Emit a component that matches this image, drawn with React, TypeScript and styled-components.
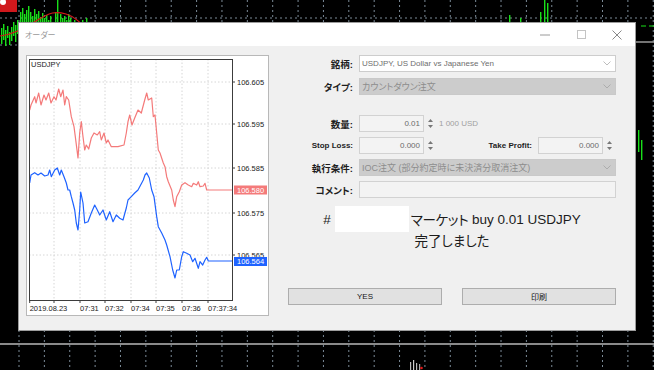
import React from 'react';
import styled, { createGlobalStyle } from 'styled-components';

const GlobalStyle = createGlobalStyle`
  html, body {
    margin: 0;
    padding: 0;
    background: #000;
  }
  body {
    width: 654px;
    height: 370px;
    overflow: hidden;
    font-family: "Liberation Sans", "Noto Sans CJK JP", sans-serif;
  }
`;

const red = '#f47a7a';
const blue = '#1f63ff';

const Desktop = styled.div`
  position: relative;
  width: 654px;
  height: 370px;
  background: #000;
  overflow: hidden;
`;

const Backdrop = styled.svg`
  position: absolute;
  left: 0;
  top: 0;
`;

const Window = styled.div`
  position: absolute;
  left: 18px;
  top: 22px;
  width: 618px;
  height: 309px;
  box-sizing: border-box;
  border: 1px solid #9c9c9c;
  background: #f0f0f0;
  display: flex;
  flex-direction: column;
`;

const TitleBar = styled.div`
  height: 23px;
  background: #fff;
  display: flex;
  align-items: center;
  padding-left: 6px;
`;

const Title = styled.div`
  flex: 1;
  font-size: 8px;
  color: #9a9a9a;
  font-feature-settings: "palt";
`;

const Controls = styled.div`
  display: flex;
  height: 100%;
`;

const ControlButton = styled.div`
  width: 36px;
  height: 100%;
  display: flex;
  align-items: center;
  justify-content: center;
`;

const Body = styled.div`
  flex: 1;
  display: flex;
  padding: 9px 0 0 7px;
`;

const ChartPanel = styled.div`
  width: 243px;
  height: 261px;
  box-sizing: border-box;
  border: 1px solid #b8b8b8;
  background: #fff;
`;

const Form = styled.div`
  margin-left: 19px;
  width: 328px;
  display: flex;
  flex-direction: column;
`;

const Section = styled.div<{ $gap: number; $top?: number }>`
  display: flex;
  flex-direction: column;
  gap: ${p => p.$gap}px;
  margin-top: ${p => p.$top ?? 0}px;
`;

const Row = styled.div`
  display: grid;
  grid-template-columns: 65px 257px;
  column-gap: 6px;
  height: 17px;
  align-items: center;
`;

const Label = styled.div<{ $jp?: boolean }>`
  text-align: right;
  font-weight: bold;
  font-size: ${p => (p.$jp ? '9.5px' : '8px')};
  color: #1e1e1e;
  white-space: nowrap;
  font-feature-settings: "palt";
`;

const Select = styled.div<{ $disabled?: boolean }>`
  height: 17px;
  box-sizing: border-box;
  border: 1px solid ${p => (p.$disabled ? '#c9c9c9' : '#cdcdcd')};
  background: ${p => (p.$disabled ? '#cccccc' : '#ffffff')};
  color: ${p => (p.$disabled ? '#8c8c8c' : '#6e6e6e')};
  font-size: 8px;
  display: flex;
  align-items: center;
  padding: 0 4px 0 2px;
  white-space: nowrap;
  overflow: hidden;
`;

const SelectText = styled.span<{ $jp?: boolean }>`
  flex: 1;
  font-size: ${p => (p.$jp ? '9px' : '8px')};
  font-feature-settings: "palt";
`;

const FieldLine = styled.div`
  display: flex;
  align-items: center;
  height: 17px;
`;

const NumberBox = styled.div`
  width: 65px;
  height: 17px;
  box-sizing: border-box;
  border: 1px solid #d2d2d2;
  background: #f3f3f3;
  color: #6b6b6b;
  font-size: 8px;
  display: flex;
  align-items: center;
  justify-content: flex-end;
  padding-right: 3px;
`;

const Spinner = styled.div`
  width: 9px;
  height: 17px;
  margin-left: 2px;
  display: flex;
  flex-direction: column;
  justify-content: center;
  align-items: center;
  gap: 3px;
`;

const Hint = styled.span`
  margin-left: 4px;
  font-size: 8px;
  color: #a0a0a0;
`;

const InlineLabel = styled(Label)`
  flex: 1;
  padding-right: 6px;
`;

const EndGap = styled.span`
  width: 2px;
`;

const TextBox = styled.div`
  height: 17px;
  box-sizing: border-box;
  border: 1px solid #d2d2d2;
  background: #f3f3f3;
`;

const Message = styled.div`
  margin-top: 8px;
  color: #1c1c1c;
  font-size: 13.5px;
`;

const MsgLine = styled.div<{ $h: number }>`
  display: flex;
  justify-content: center;
  align-items: center;
  height: ${p => p.$h}px;
  white-space: pre;
  font-feature-settings: "palt";
`;

const Redacted = styled.span`
  display: inline-block;
  width: 74px;
  height: 26px;
  background: #fff;
  margin: 0 2px 0 4px;
`;

const Kana = styled.span`
  letter-spacing: -0.3px;
`;

const ButtonRow = styled.div`
  margin-top: 40px;
  display: flex;
  gap: 20px;
`;

const Button = styled.div`
  width: 154px;
  height: 17px;
  box-sizing: border-box;
  border: 1px solid #adadad;
  background: #e1e1e1;
  font-size: 8px;
  color: #151515;
  display: flex;
  align-items: center;
  justify-content: center;
`;

const Chevron = ({ color = '#aaa' }: { color?: string }) => (
  <svg width="8" height="5" viewBox="0 0 8 5">
    <polyline points="0.5,0.5 4,4 7.5,0.5" fill="none" stroke={color} strokeWidth="0.9" />
  </svg>
);

const Arrow = ({ up }: { up?: boolean }) => (
  <svg width="5" height="3" viewBox="0 0 5 3">
    <polygon points={up ? '0,3 2.5,0 5,3' : '0,0 2.5,3 5,0'} fill="#777" />
  </svg>
);

const Spin = () => (
  <Spinner>
    <Arrow up />
    <Arrow />
  </Spinner>
);

// background trading chart behind the dialog
const gridX = Array.from({ length: 26 }, (_, k) => 19 + k * 25.37);

const candles: [number, number, number][] = [
  [1, 28, 44], [3, 24, 40], [5, 30, 46], [7, 26, 38], [9, 32, 45], [11, 27, 41], [13, 22, 36],
  [15, 25, 42], [17, 20, 34], [20, 12, 30], [22, 8, 26], [24, 14, 28], [26, 10, 24], [28, 6, 22],
  [30, 12, 26], [32, 16, 30], [34, 9, 24], [36, 14, 28], [38, 11, 25], [40, 17, 30], [42, 13, 27],
  [44, 18, 32], [46, 15, 28], [48, 20, 34], [50, 16, 30], [52, 22, 34], [55, 12, 28], [57, 0, 30],
  [60, 14, 28], [62, 18, 30], [64, 16, 32], [66, 20, 34], [68, 14, 30], [70, 18, 30], [72, 22, 36],
  [74, 20, 32], [78, 24, 38], [82, 20, 32], [86, 18, 30], [90, 24, 34],
  [509, 15, 26], [520, 18, 24], [540, 12, 22], [544, 0, 26], [547, 3, 22],
  [638, 130, 152], [641, 140, 160],
];

const Background = () => (
  <Backdrop width="654" height="370" viewBox="0 0 654 370">
    <rect width="654" height="370" fill="#000" />
    {gridX.map(x => (
      <line key={x} x1={x} y1="0" x2={x} y2="370" stroke="#7b8a97" strokeWidth="1" strokeDasharray="2 3" />
    ))}
    <line x1="0" y1="18" x2="654" y2="18" stroke="#7b8a97" strokeDasharray="2 3" />
    <line x1="0" y1="45" x2="18" y2="45" stroke="#7b8a97" strokeDasharray="2 3" />
    <line x1="636" y1="42" x2="654" y2="42" stroke="#9a9a9a" strokeWidth="1.5" />
    <line x1="0" y1="344" x2="654" y2="344" stroke="#8a8a8a" strokeWidth="2" />
    {candles.map(([x, t, b]) => (
      <rect key={x} x={x} y={t} width="1.4" height={b - t} fill="#19e019" />
    ))}
    <line x1="641" y1="26" x2="646" y2="26" stroke="#19e019" />
    <line x1="649" y1="26" x2="654" y2="26" stroke="#19e019" />
    <path d="M0 36 C 10 35, 22 30, 36 21 S 56 11, 66 14 S 76 20, 82 24" fill="none" stroke="#d01818" strokeWidth="1.2" />
    <rect x="0" y="0" width="17" height="12" fill="#d0181c" />
    <circle cx="3" cy="2" r="3" fill="#fff" />
    <rect x="410" y="362" width="1.2" height="8" fill="#bbb" />
    <rect x="413" y="360" width="1.2" height="10" fill="#ccc" />
    <rect x="416" y="363" width="1.2" height="7" fill="#bbb" />
    <rect x="419" y="364" width="1.2" height="6" fill="#aaa" />
    <circle cx="421.5" cy="368" r="1.3" fill="#e01818" />
  </Backdrop>
);

const redPts =
  '29.7,110 31,105 34.7,96.7 36,103 38.7,93 41,105 44,95 46,100 48.7,93 51,103 54,96.7 56,100 58.7,89 60.7,96.7 63,90 64.7,105 66.3,96.7 68.7,100 71.3,116.7 74,126.7 75.3,136.7 78,158 79.7,133 81.3,121.7 83,136.7 84.7,150 86.3,145 88.7,149 91.3,138 94,133 97.3,135 99.7,131.7 101.3,140 104,133 106.3,143 108,140 111.3,146.7 118,146.7 124,145 126.3,133 128,121.7 129.7,115 132,125 134.7,118 138,110 141.3,113 144.7,100 146.7,93 148.3,100 151.7,98 153.3,116.7 155,115 158.3,150 160,153 163.3,163 165,166.7 166.7,176.7 168.3,181.7 171.7,190 173.3,200 175,206.7 176.7,196.7 179.3,191.7 181.7,185 185,182.7 188.3,185 191.7,186.7 193.3,183.3 196.7,185 198.3,181.7 200,186.7 203.3,186 205,183.3 206.7,190 232,190';

const bluePts =
  '29.7,183 31,175 34.7,172.7 38,175 41,173 44.7,176 48,175 49.7,170 51.3,176.7 54.7,170 57.3,168 59.7,175 61.3,170 64,176.7 66.3,183 68,190 69.7,190 71.3,196.7 73,203 74.7,210 76.3,223 78,230 79.7,210 80.7,192 83,203 84.7,223 88,221.7 91.3,213 94.7,205 97.3,210 99.7,215 103,210 106.3,220 109.7,211.7 113,221.7 116.3,215 119.7,218.3 123,220 126.3,208 128,200 131.3,196.7 134.7,193 138,190 143.3,180 145,175 146.7,173 149.3,178 151.7,190 154,196.7 156.7,216.7 158.3,226.7 161.7,233 165,240 166.7,245 170,256.7 172.7,270 175,278 176.7,270 179.3,270 181.7,256.7 183.3,251.7 186.7,253.3 190,255 192.7,261.7 195,258.3 198.3,268.3 200,261.7 202.7,265 205,260 206.7,257.3 208.3,261 232,261';

const prices: [string, number][] = [
  ['106.605', 82],
  ['106.595', 124],
  ['106.585', 168],
  ['106.575', 213],
  ['106.565', 255],
];

const times: [string, number][] = [
  ['2019.08.23', 29.7],
  ['', 54],
  ['07:31', 80],
  ['07:32', 105],
  ['07:34', 131],
  ['07:35', 156],
  ['07:36', 182],
  ['07:37:34', 208],
];

const PriceChart = () => (
  <svg width="241" height="259" viewBox="27 56 241 259" fontFamily="Liberation Sans, sans-serif">
    {prices.map(([, y]) => (
      <line key={y} x1="29" y1={y} x2="232" y2={y} stroke="#d6d6d6" strokeDasharray="1.5 2" />
    ))}
    {times.slice(1).map(([, x]) => (
      <line key={x} x1={x} y1="59" x2={x} y2="300" stroke="#d6d6d6" strokeDasharray="1.5 2" />
    ))}
    <polyline points={redPts} fill="none" stroke={red} strokeWidth="1.2" strokeLinejoin="round" />
    <polyline points={bluePts} fill="none" stroke={blue} strokeWidth="1.2" strokeLinejoin="round" />
    <rect x="29.5" y="59.5" width="203" height="241" fill="none" stroke="#3c3c3c" strokeWidth="1" />
    <text x="31" y="67" fontSize="7.5" fill="#222">USDJPY</text>
    {prices.map(([p, y]) => (
      <g key={p}>
        <line x1="232" y1={y} x2="235" y2={y} stroke="#3c3c3c" />
        <text x="237" y={y + 2.7} fontSize="7.5" fill="#222">{p}</text>
      </g>
    ))}
    {times.map(([t, x]) => (
      <g key={x}>
        <line x1={x} y1="300" x2={x} y2="303" stroke="#3c3c3c" />
        {t && <text x={x} y="311" fontSize="7.5" fill="#222">{t}</text>}
      </g>
    ))}
    <rect x="234" y="185.5" width="33" height="9" fill={red} />
    <text x="237" y="192.7" fontSize="7.5" fill="#fff">106.580</text>
    <rect x="234" y="257" width="33" height="9" fill={blue} />
    <text x="237" y="264.2" fontSize="7.5" fill="#fff">106.564</text>
  </svg>
);

export default function App() {
  return (
    <Desktop>
      <GlobalStyle />
      <Background />
      <Window>
        <TitleBar>
          <Title>オーダー</Title>
          <Controls>
            <ControlButton>
              <svg width="10" height="2" viewBox="0 0 10 2">
                <line x1="0" y1="1" x2="10" y2="1" stroke="#9a9a9a" />
              </svg>
            </ControlButton>
            <ControlButton>
              <svg width="9" height="9" viewBox="0 0 9 9">
                <rect x="0.5" y="0.5" width="8" height="8" fill="none" stroke="#c4c4c4" />
              </svg>
            </ControlButton>
            <ControlButton>
              <svg width="10" height="10" viewBox="0 0 10 10">
                <path d="M0.5 0.5 L9.5 9.5 M9.5 0.5 L0.5 9.5" stroke="#7a7a7a" strokeWidth="0.9" />
              </svg>
            </ControlButton>
          </Controls>
        </TitleBar>
        <Body>
          <ChartPanel>
            <PriceChart />
          </ChartPanel>
          <Form>
            <Section $gap={6}>
              <Row>
                <Label $jp>銘柄:</Label>
                <Select>
                  <SelectText>USDJPY, US Dollar vs Japanese Yen</SelectText>
                  <Chevron color="#b5b5b5" />
                </Select>
              </Row>
              <Row>
                <Label $jp>タイプ:</Label>
                <Select $disabled>
                  <SelectText $jp>カウントダウン注文</SelectText>
                  <Chevron color="#a8a8a8" />
                </Select>
              </Row>
            </Section>
            <Section $gap={5} $top={20}>
              <Row>
                <Label $jp>数量:</Label>
                <FieldLine>
                  <NumberBox>0.01</NumberBox>
                  <Spin />
                  <Hint>1 000 USD</Hint>
                </FieldLine>
              </Row>
              <Row>
                <Label>Stop Loss:</Label>
                <FieldLine>
                  <NumberBox>0.000</NumberBox>
                  <Spin />
                  <InlineLabel>Take Profit:</InlineLabel>
                  <NumberBox>0.000</NumberBox>
                  <Spin />
                  <EndGap />
                </FieldLine>
              </Row>
              <Row>
                <Label $jp>執行条件:</Label>
                <Select $disabled>
                  <SelectText $jp>IOC注文 (部分約定時に未決済分取消注文)</SelectText>
                  <Chevron color="#a8a8a8" />
                </Select>
              </Row>
              <Row>
                <Label $jp>コメント:</Label>
                <TextBox />
              </Row>
            </Section>
            <Message>
              <MsgLine $h={26}>
                #<Redacted />
                <Kana>マーケット</Kana> buy 0.01 USDJPY
              </MsgLine>
              <MsgLine $h={16}>完了しました</MsgLine>
            </Message>
            <ButtonRow>
              <Button>YES</Button>
              <Button>印刷</Button>
            </ButtonRow>
          </Form>
        </Body>
      </Window>
    </Desktop>
  );
}
